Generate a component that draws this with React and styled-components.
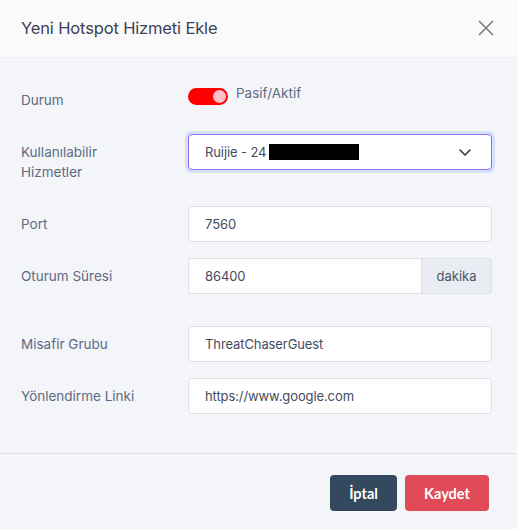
import React from "react";
import styled, { createGlobalStyle } from "styled-components";

const Global = createGlobalStyle`
  html, body { margin: 0; padding: 0; background: #f4f5f9; }
  body { font-family: Inter, "Noto Sans", sans-serif; }
  * { box-sizing: border-box; }
`;

const Modal = styled.div`
  width: 517px;
  height: 529px;
  background: #f4f5f9;
  display: flex;
  flex-direction: column;
`;

const Header = styled.div`
  height: 58px;
  background: #fafafa;
  border-bottom: 1px solid #eceef3;
  display: flex;
  align-items: center;
  justify-content: space-between;
  padding: 0 23px 2px 21px;
`;

const Title = styled.h1`
  margin: 0;
  font-size: 16.5px;
  font-weight: 400;
  color: #3a4257;
  letter-spacing: -0.15px;
`;

const CloseButton = styled.button`
  border: none;
  background: none;
  padding: 0;
  width: 16px;
  height: 16px;
  display: flex;
  cursor: pointer;
`;

const Body = styled.div`
  flex: 1;
  padding: 30px 25px 0 21px;
  display: flex;
  flex-direction: column;
`;

const Row = styled.div`
  display: grid;
  grid-template-columns: 167px 304px;
  align-items: start;
  margin-top: ${(p) => p.$mt || 0}px;
`;

const Label = styled.div`
  font-size: 13.5px;
  line-height: 20px;
  color: #5d6a84;
  padding-top: ${(p) => (p.$pt != null ? p.$pt : 8)}px;
`;

const SwitchLine = styled.div`
  display: flex;
  align-items: flex-start;
  gap: 8px;
`;

const Track = styled.div`
  width: 40px;
  height: 17px;
  border-radius: 9px;
  background: #ff0000;
  position: relative;
  flex-shrink: 0;
`;

const Knob = styled.span`
  position: absolute;
  right: 2px;
  top: 2px;
  width: 13px;
  height: 13px;
  border-radius: 50%;
  background: #ffc0cb;
`;

const SwitchText = styled.span`
  font-size: 13.5px;
  line-height: 14px;
  color: #5d6a84;
  margin-top: -2px;
`;

const Select = styled.div`
  height: 36px;
  background: #fff;
  border: 1px solid #8b6cf0;
  border-radius: 4px;
  box-shadow: 0 0 0 3px #d6e0fb;
  display: flex;
  align-items: center;
  padding: 0 20px 0 16px;
  font-size: 13px;
  letter-spacing: -0.1px;
  color: #444c5e;
`;

const SelectText = styled.span`
  display: flex;
  align-items: center;
  flex: 1;
`;

const Redact = styled.span`
  display: inline-block;
  width: 90px;
  height: 16px;
  background: #000;
  margin-left: 3px;
`;

const Input = styled.div`
  height: 36px;
  background: #fff;
  border: 1px solid #dde0ea;
  border-radius: 4px;
  display: flex;
  align-items: center;
  padding: 0 16px;
  font-size: 13px;
  letter-spacing: -0.1px;
  color: #444c5e;
  flex: 1;
`;

const Group = styled.div`
  display: flex;
  height: 36px;
`;

const GroupInput = styled(Input)`
  border-radius: 4px 0 0 4px;
  border-right: none;
`;

const Addon = styled.div`
  width: 71px;
  background: #e9ecf2;
  border: 1px solid #dde0ea;
  border-radius: 0 4px 4px 0;
  display: flex;
  align-items: center;
  justify-content: center;
  font-size: 13px;
  color: #4d5569;
`;

const Footer = styled.div`
  border-top: 1px solid #dcdfe9;
  height: 76px;
  display: flex;
  justify-content: flex-end;
  align-items: flex-start;
  gap: 8px;
  padding: 21px 28px 0 0;
`;

const Button = styled.button`
  height: 36px;
  width: ${(p) => p.$w}px;
  padding: 0;
  border: none;
  border-radius: 4px;
  background: ${(p) => p.$bg};
  color: #fff;
  font-family: Lato, "Open Sans", sans-serif;
  font-weight: 700;
  font-size: 14.5px;
  cursor: pointer;
`;

const Chevron = () => (
  <svg width="12" height="7" viewBox="0 0 12 7" fill="none">
    <path d="M1 1l5 5 5-5" stroke="#333a48" strokeWidth="1.6" strokeLinecap="round" strokeLinejoin="round" />
  </svg>
);

export default function App() {
  return (
    <>
      <Global />
      <Modal>
        <Header>
          <Title>Yeni Hotspot Hizmeti Ekle</Title>
          <CloseButton aria-label="Kapat">
            <svg width="16" height="16" viewBox="0 0 16 16">
              <path d="M1 1l14 14M15 1L1 15" stroke="#7a7a7a" strokeWidth="1.6" />
            </svg>
          </CloseButton>
        </Header>
        <Body>
          <Row>
            <Label $pt={2}>Durum</Label>
            <SwitchLine>
              <Track><Knob /></Track>
              <SwitchText>Pasif/Aktif</SwitchText>
            </SwitchLine>
          </Row>
          <Row $mt={24}>
            <Label>Kullanılabilir<br />Hizmetler</Label>
            <Select>
              <SelectText>Ruijie - 24<Redact /></SelectText>
              <Chevron />
            </Select>
          </Row>
          <Row $mt={24}>
            <Label>Port</Label>
            <Input>7560</Input>
          </Row>
          <Row $mt={16}>
            <Label>Oturum Süresi</Label>
            <Group>
              <GroupInput>86400</GroupInput>
              <Addon>dakika</Addon>
            </Group>
          </Row>
          <Row $mt={32}>
            <Label>Misafir Grubu</Label>
            <Input>ThreatChaserGuest</Input>
          </Row>
          <Row $mt={16}>
            <Label>Yönlendirme Linki</Label>
            <Input>https://www.google.com</Input>
          </Row>
        </Body>
        <Footer>
          <Button $bg="#34495e" $w={67}>İptal</Button>
          <Button $bg="#e14a57" $w={84}>Kaydet</Button>
        </Footer>
      </Modal>
    </>
  );
}
